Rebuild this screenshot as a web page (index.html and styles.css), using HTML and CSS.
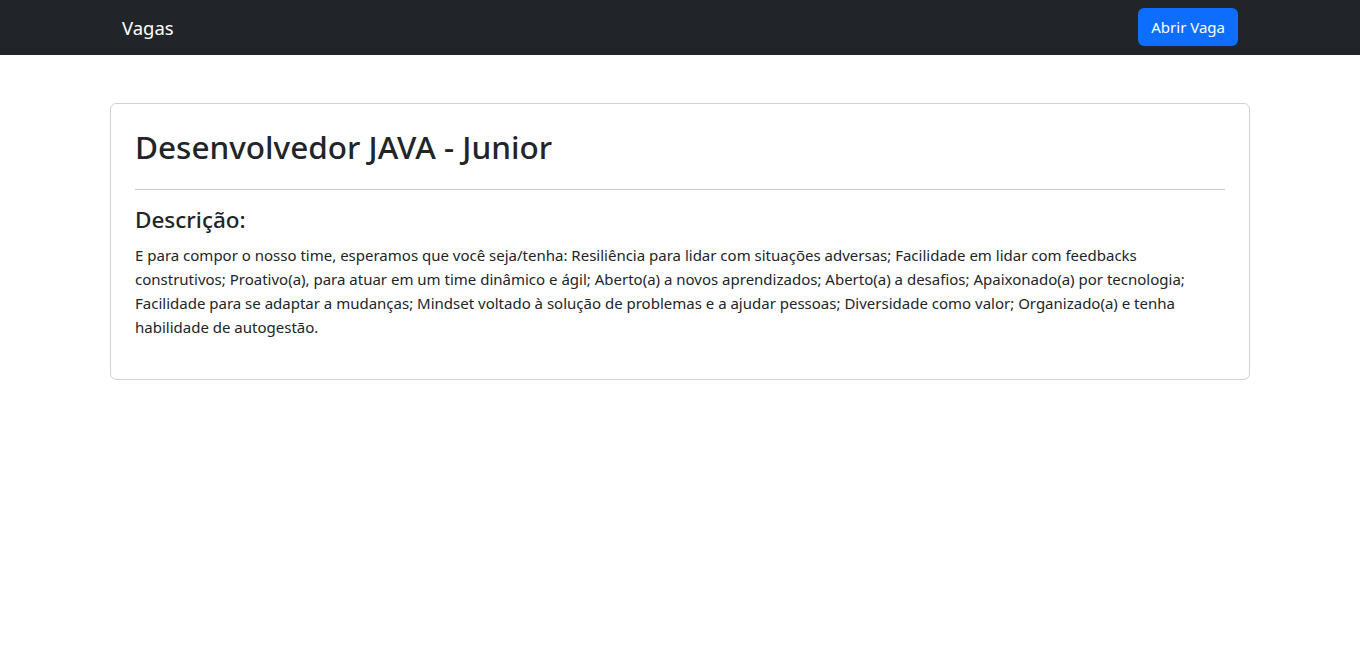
FILE: index.html
```html
<!DOCTYPE html>
<html lang="pt-BR">
<head>
<meta charset="utf-8">
<title>Vagas</title>
<link rel="stylesheet" href="styles.css">
</head>
<body>
<nav class="navbar">
  <div class="container nav-inner">
    <a class="brand" href="#">Vagas</a>
    <a class="btn-primary" href="#">Abrir Vaga</a>
  </div>
</nav>
<main class="container main">
  <div class="card">
    <div class="card-body">
      <h2 class="title">Desenvolvedor JAVA - Junior</h2>
      <hr class="divider">
      <h4 class="subtitle">Descrição:</h4>
      <p class="desc">E para compor o nosso time, esperamos que você seja/tenha: Resiliência para lidar com situações adversas; Facilidade em lidar com feedbacks construtivos; Proativo(a), para atuar em um time dinâmico e ágil; Aberto(a) a novos aprendizados; Aberto(a) a desafios; Apaixonado(a) por tecnologia; Facilidade para se adaptar a mudanças; Mindset voltado à solução de problemas e a ajudar pessoas; Diversidade como valor; Organizado(a) e tenha habilidade de autogestão.</p>
    </div>
  </div>
</main>
</body>
</html>
```
FILE: styles.css
```css
* { box-sizing: border-box; }
body {
  margin: 0;
  font-family: "Noto Sans", "Open Sans", sans-serif;
  font-size: 15px;
  line-height: 24px;
  color: #212529;
  background: #fff;
}
.container {
  width: 1140px;
  margin: 0 auto;
}
.navbar {
  background: #212529;
  padding: 8px 0 9px;
}
.nav-inner {
  display: flex;
  align-items: center;
  justify-content: space-between;
  padding: 0 12px;
}
.brand {
  color: #fff;
  text-decoration: none;
  font-size: 18.5px;
  line-height: 30px;
  padding-top: 1px;
}
.btn-primary {
  display: inline-block;
  background: #0d6efd;
  color: #fff;
  text-decoration: none;
  font-size: 15px;
  line-height: 24px;
  padding: 7px 13px;
  border-radius: 6px;
}
.main {
  margin-top: 48px;
}
.card {
  border: 1px solid rgba(0,0,0,.175);
  border-radius: 6px;
}
.card-body {
  padding: 24px;
}
.title {
  margin: 0 0 23px;
  font-size: 31.5px;
  font-weight: 500;
  line-height: 38.4px;
}
.divider {
  margin: 0 0 16px;
  border: 0;
  border-top: 1px solid #ccc;
}
.subtitle {
  margin: 0 0 8px;
  font-size: 22.5px;
  font-weight: 500;
  line-height: 28.8px;
}
.desc {
  margin: 0 0 16px;
}
```
